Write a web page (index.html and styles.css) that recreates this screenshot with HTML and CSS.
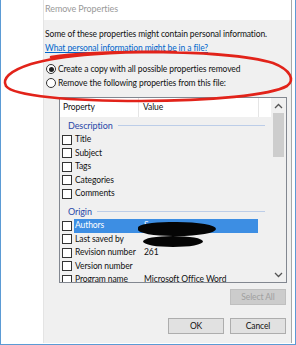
FILE: index.html
```html
<!DOCTYPE html>
<html lang="en">

<head>
  <meta charset="UTF-8">
  <meta name="viewport" content="width=device-width, initial-scale=1.0">
  <link rel="stylesheet" href="styles.css">
</head>

<body>
  <div class="screen">
    <div class="gutter"></div>

    <div class="dialog">
      <div class="dialog-title">Remove Properties</div>

      <div class="dialog-body">
        <p class="intro">Some of these properties might contain personal information.</p>
        <a class="help-link" href="#">What personal information might be in a file?</a>

        <div class="options">
          <label class="option">
            <span class="radio checked"></span>
            <span>Create a copy with all possible properties removed</span>
          </label>
          <label class="option">
            <span class="radio"></span>
            <span>Remove the following properties from this file:</span>
          </label>
        </div>

        <div class="listbox">
          <div class="list-main">
            <div class="list-header">
              <div class="col-label">Property</div>
              <div class="col-value">Value</div>
              <div class="col-rest"></div>
            </div>

            <div class="list-rows">
              <div class="group first">
                <span class="group-name">Description</span>
                <span class="group-line"></span>
              </div>
              <div class="row"><span class="check"></span><span class="cell-label">Title</span><span class="cell-value"></span></div>
              <div class="row"><span class="check"></span><span class="cell-label">Subject</span><span class="cell-value"></span></div>
              <div class="row"><span class="check"></span><span class="cell-label">Tags</span><span class="cell-value"></span></div>
              <div class="row"><span class="check"></span><span class="cell-label">Categories</span><span class="cell-value"></span></div>
              <div class="row"><span class="check"></span><span class="cell-label">Comments</span><span class="cell-value"></span></div>

              <div class="group">
                <span class="group-name">Origin</span>
                <span class="group-line"></span>
              </div>
              <div class="row selected"><span class="check"></span><span class="cell-label">Authors</span><span class="cell-value">S</span></div>
              <div class="row"><span class="check"></span><span class="cell-label">Last saved by</span><span class="cell-value"></span></div>
              <div class="row"><span class="check"></span><span class="cell-label">Revision number</span><span class="cell-value">261</span></div>
              <div class="row"><span class="check"></span><span class="cell-label">Version number</span><span class="cell-value"></span></div>
              <div class="row"><span class="check"></span><span class="cell-label">Program name</span><span class="cell-value">Microsoft Office Word</span></div>

              <!-- marker scribbles over the names -->
              <div class="redact redact-author"></div>
              <div class="redact redact-saved"></div>
            </div>
          </div>

          <div class="scrollbar">
            <div class="scroll-arrow">
              <svg width="9" height="6" viewBox="0 0 9 6"><polyline points="1,5 4.5,1.5 8,5" fill="none" stroke="#555" stroke-width="1.3"/></svg>
            </div>
            <div class="scroll-thumb"></div>
            <div class="scroll-track"></div>
            <div class="scroll-arrow">
              <svg width="9" height="6" viewBox="0 0 9 6"><polyline points="1,1 4.5,4.5 8,1" fill="none" stroke="#555" stroke-width="1.3"/></svg>
            </div>
          </div>
        </div>

        <div class="select-row">
          <button class="btn" disabled>Select All</button>
        </div>

        <div class="dialog-buttons">
          <button class="btn">OK</button>
          <button class="btn">Cancel</button>
        </div>
      </div>
    </div>

    <div class="edge"></div>

    <svg class="annotation" width="296" height="345" viewBox="0 0 296 345">
      <path d="M 175 52 C 120 51, 60 55, 30 64 C 8 71, 1 79, 5 86 C 12 96, 70 101, 140 101 C 210 101, 270 95, 286 86 C 294 80, 290 70, 272 63 C 250 56, 200 52, 140 52 C 100 52, 70 54, 50 57"
        fill="none" stroke="#e2231a" stroke-width="2.6" stroke-linecap="round" />
    </svg>
  </div>
</body>

</html>
```

FILE: styles.css
```css
body {
  margin: 0;
  font-family: Lato, "Liberation Sans", sans-serif;
  font-size: 8.5px;
  letter-spacing: -0.1px;
  color: #111;
}

.screen {
  position: relative;
  width: 296px;
  height: 345px;
  box-sizing: border-box;
  border: 1px solid #5b9bd5;
  border-top: none;
  background: #fff;
  display: flex;
  overflow: hidden;
}

.gutter {
  width: 42px;
  flex-shrink: 0;
  background: #fff;
}

.dialog {
  width: 249px;
  height: 343px;
  flex-shrink: 0;
  box-sizing: border-box;
  border-left: 1px solid #e4e4e4;
  border-right: 1px solid #a9a9a9;
  display: flex;
  flex-direction: column;
}

.edge {
  flex: 1;
  background: #fff;
}

.dialog-title {
  height: 20px;
  line-height: 18px;
  padding-left: 1px;
  font-size: 9px;
  color: #9a9a9a;
  background: #fff;
}

.dialog-body {
  flex: 1;
  background: #f0f0f0;
  padding: 7px 4px 0 1px;
  display: flex;
  flex-direction: column;
}

.intro {
  margin: 0;
  line-height: 14px;
}

.help-link {
  display: block;
  line-height: 14px;
  color: #0066cc;
  text-decoration: underline;
}

.options {
  margin-top: 7px;
  display: flex;
  flex-direction: column;
}

.option {
  height: 14px;
  display: flex;
  align-items: center;
  gap: 2px;
  padding-left: 1px;
}

.radio {
  width: 10px;
  height: 10px;
  box-sizing: border-box;
  border: 1px solid #333;
  border-radius: 50%;
  background: #fff;
  display: flex;
  align-items: center;
  justify-content: center;
}

.radio.checked::after {
  content: "";
  width: 5px;
  height: 5px;
  border-radius: 50%;
  background: #222;
}

.listbox {
  margin: 7px 0 0 14px;
  width: 228px;
  height: 186px;
  box-sizing: border-box;
  border: 1px solid #828790;
  display: flex;
}

.list-main {
  width: 211px;
  display: flex;
  flex-direction: column;
  overflow: hidden;
}

.list-header {
  height: 19px;
  flex-shrink: 0;
  background: #fff;
  display: flex;
}

.list-header > div {
  line-height: 19px;
  box-sizing: border-box;
}

.col-label {
  width: 79px;
  padding-left: 3px;
  border-right: 1px solid #e5e5e5;
}

.col-value {
  width: 120px;
  padding-left: 4px;
  border-right: 1px solid #e5e5e5;
}

.col-rest {
  flex: 1;
}

.list-rows {
  position: relative;
  flex: 1;
  overflow: hidden;
}

.group {
  height: 16px;
  display: flex;
  align-items: center;
  padding: 0 6px 0 8px;
  margin-top: 2.5px;
}

.group.first {
  margin-top: 0;
}

.group-name {
  color: #2a48a8;
  font-size: 9px;
  padding-right: 5px;
}

.group-line {
  flex: 1;
  height: 1px;
  background: #bccde8;
}

.row {
  height: 13.5px;
  display: flex;
  align-items: center;
}

.check {
  width: 10px;
  height: 10px;
  box-sizing: border-box;
  border: 1px solid #333;
  background: #fff;
  margin: 0 2px 0 2px;
  flex-shrink: 0;
}

.cell-label,
.cell-value {
  height: 13.5px;
  line-height: 13.5px;
  white-space: nowrap;
  overflow: hidden;
}

.cell-label {
  width: 65px;
  padding-left: 1px;
  box-sizing: border-box;
}

.cell-value {
  width: 119px;
  padding-left: 5px;
  box-sizing: border-box;
}

.row.selected .cell-label,
.row.selected .cell-value {
  background: #3d8ee3;
  color: #fff;
}

.redact {
  position: absolute;
  background: #050505;
  border-radius: 50%;
}

.redact-author {
  left: 78px;
  top: 105px;
  width: 78px;
  height: 14px;
  border-radius: 40% 50% 50% 45%;
}

.redact-saved {
  left: 83px;
  top: 119px;
  width: 60px;
  height: 11px;
}

.scrollbar {
  width: 15px;
  background: #f0f0f0;
  display: flex;
  flex-direction: column;
}

.scroll-arrow {
  height: 15px;
  display: flex;
  align-items: center;
  justify-content: center;
}

.scroll-thumb {
  height: 44px;
  margin: 0 2px;
  background: #cdcdcd;
}

.scroll-track {
  flex: 1;
}

.select-row {
  display: flex;
  justify-content: flex-end;
  margin-top: 6px;
  padding-right: 1px;
}

.dialog-buttons {
  display: flex;
  justify-content: flex-end;
  gap: 6px;
  margin-top: 13px;
  padding-right: 1px;
}

.btn {
  width: 56px;
  height: 16px;
  padding: 0;
  font-family: inherit;
  font-size: 8.5px;
  letter-spacing: inherit;
  color: #111;
  background: #e1e1e1;
  border: 1px solid #adadad;
  border-radius: 0;
}

.btn:disabled {
  background: #cccccc;
  border-color: #bfbfbf;
  color: #a0a0a0;
}

.annotation {
  position: absolute;
  left: 0;
  top: 0;
  pointer-events: none;
}
```
